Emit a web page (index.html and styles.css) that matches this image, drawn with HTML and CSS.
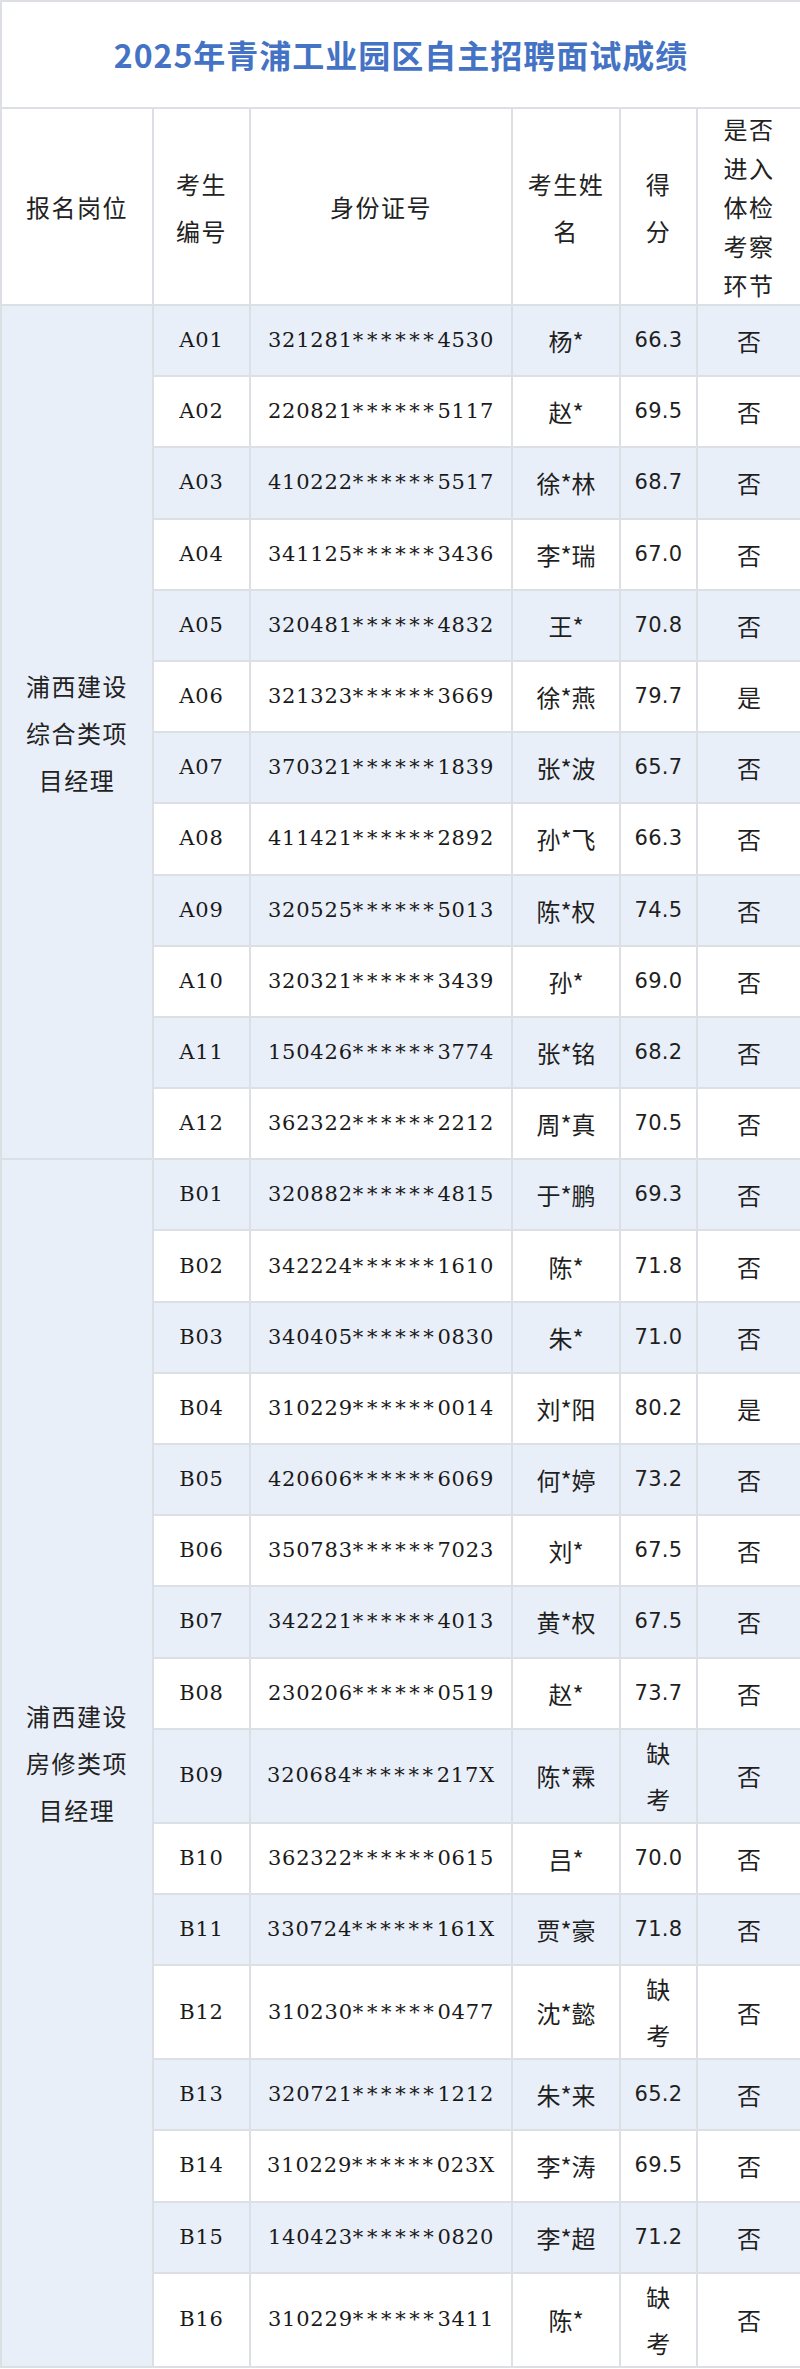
FILE: index.html
```html
<!DOCTYPE html>
<html lang="zh-CN">
<head>
<meta charset="utf-8">
<title>2025年青浦工业园区自主招聘面试成绩</title>
<link rel="stylesheet" href="styles.css">
</head>
<body>
<table class="score-table">
  <colgroup>
    <col class="c-post"><col class="c-no"><col class="c-id"><col class="c-name"><col class="c-score"><col class="c-pass">
  </colgroup>
  <tr class="title-row"><td colspan="6" class="title">2025年青浦工业园区自主招聘面试成绩</td></tr>
  <tr class="head-row">
    <th>报名岗位</th><th>考生编号</th><th>身份证号</th><th class="name-head">考生姓名</th><th>得分</th><th class="pass-head">是否进入体检考察环节</th>
  </tr>
  <tr class="alt"><td rowspan="12" class="post">浦西建设综合类项目经理</td><td class="no">A01</td><td class="id">321281<span class="mask">******</span>4530</td><td class="name">杨*</td><td class="score">66.3</td><td class="pass">否</td></tr>
  <tr><td class="no">A02</td><td class="id">220821<span class="mask">******</span>5117</td><td class="name">赵*</td><td class="score">69.5</td><td class="pass">否</td></tr>
  <tr class="alt"><td class="no">A03</td><td class="id">410222<span class="mask">******</span>5517</td><td class="name">徐*林</td><td class="score">68.7</td><td class="pass">否</td></tr>
  <tr><td class="no">A04</td><td class="id">341125<span class="mask">******</span>3436</td><td class="name">李*瑞</td><td class="score">67.0</td><td class="pass">否</td></tr>
  <tr class="alt"><td class="no">A05</td><td class="id">320481<span class="mask">******</span>4832</td><td class="name">王*</td><td class="score">70.8</td><td class="pass">否</td></tr>
  <tr><td class="no">A06</td><td class="id">321323<span class="mask">******</span>3669</td><td class="name">徐*燕</td><td class="score">79.7</td><td class="pass">是</td></tr>
  <tr class="alt"><td class="no">A07</td><td class="id">370321<span class="mask">******</span>1839</td><td class="name">张*波</td><td class="score">65.7</td><td class="pass">否</td></tr>
  <tr><td class="no">A08</td><td class="id">411421<span class="mask">******</span>2892</td><td class="name">孙*飞</td><td class="score">66.3</td><td class="pass">否</td></tr>
  <tr class="alt"><td class="no">A09</td><td class="id">320525<span class="mask">******</span>5013</td><td class="name">陈*权</td><td class="score">74.5</td><td class="pass">否</td></tr>
  <tr><td class="no">A10</td><td class="id">320321<span class="mask">******</span>3439</td><td class="name">孙*</td><td class="score">69.0</td><td class="pass">否</td></tr>
  <tr class="alt"><td class="no">A11</td><td class="id">150426<span class="mask">******</span>3774</td><td class="name">张*铭</td><td class="score">68.2</td><td class="pass">否</td></tr>
  <tr><td class="no">A12</td><td class="id">362322<span class="mask">******</span>2212</td><td class="name">周*真</td><td class="score">70.5</td><td class="pass">否</td></tr>

  <tr class="alt"><td rowspan="16" class="post">浦西建设房修类项目经理</td><td class="no">B01</td><td class="id">320882<span class="mask">******</span>4815</td><td class="name">于*鹏</td><td class="score">69.3</td><td class="pass">否</td></tr>
  <tr><td class="no">B02</td><td class="id">342224<span class="mask">******</span>1610</td><td class="name">陈*</td><td class="score">71.8</td><td class="pass">否</td></tr>
  <tr class="alt"><td class="no">B03</td><td class="id">340405<span class="mask">******</span>0830</td><td class="name">朱*</td><td class="score">71.0</td><td class="pass">否</td></tr>
  <tr><td class="no">B04</td><td class="id">310229<span class="mask">******</span>0014</td><td class="name">刘*阳</td><td class="score">80.2</td><td class="pass">是</td></tr>
  <tr class="alt"><td class="no">B05</td><td class="id">420606<span class="mask">******</span>6069</td><td class="name">何*婷</td><td class="score">73.2</td><td class="pass">否</td></tr>
  <tr><td class="no">B06</td><td class="id">350783<span class="mask">******</span>7023</td><td class="name">刘*</td><td class="score">67.5</td><td class="pass">否</td></tr>
  <tr class="alt"><td class="no">B07</td><td class="id">342221<span class="mask">******</span>4013</td><td class="name">黄*权</td><td class="score">67.5</td><td class="pass">否</td></tr>
  <tr><td class="no">B08</td><td class="id">230206<span class="mask">******</span>0519</td><td class="name">赵*</td><td class="score">73.7</td><td class="pass">否</td></tr>
  <tr class="alt"><td class="no">B09</td><td class="id">320684<span class="mask">******</span>217X</td><td class="name">陈*霖</td><td class="score absent">缺考</td><td class="pass">否</td></tr>
  <tr><td class="no">B10</td><td class="id">362322<span class="mask">******</span>0615</td><td class="name">吕*</td><td class="score">70.0</td><td class="pass">否</td></tr>
  <tr class="alt"><td class="no">B11</td><td class="id">330724<span class="mask">******</span>161X</td><td class="name">贾*豪</td><td class="score">71.8</td><td class="pass">否</td></tr>
  <tr><td class="no">B12</td><td class="id">310230<span class="mask">******</span>0477</td><td class="name">沈*懿</td><td class="score absent">缺考</td><td class="pass">否</td></tr>
  <tr class="alt"><td class="no">B13</td><td class="id">320721<span class="mask">******</span>1212</td><td class="name">朱*来</td><td class="score">65.2</td><td class="pass">否</td></tr>
  <tr><td class="no">B14</td><td class="id">310229<span class="mask">******</span>023X</td><td class="name">李*涛</td><td class="score">69.5</td><td class="pass">否</td></tr>
  <tr class="alt"><td class="no">B15</td><td class="id">140423<span class="mask">******</span>0820</td><td class="name">李*超</td><td class="score">71.2</td><td class="pass">否</td></tr>
  <tr><td class="no">B16</td><td class="id">310229<span class="mask">******</span>3411</td><td class="name">陈*</td><td class="score absent">缺考</td><td class="pass">否</td></tr>
</table>
</body>
</html>
```

FILE: styles.css
```css
html, body {
  margin: 0;
  padding: 0;
  background: #ffffff;
}

body {
  font-family: "Noto Sans CJK SC", "Noto Sans", sans-serif;
  color: #1f1f1f;
}

.score-table {
  width: 800px;
  table-layout: fixed;
  border-collapse: collapse;
}

.c-post { width: 152px; }
.c-no { width: 97px; }
.c-id { width: 262px; }
.c-name { width: 108px; }
.c-score { width: 77px; }
.c-pass { width: 104px; }

.score-table td,
.score-table th {
  border: 2px solid #dcdfe4;
  padding: 0 15px;
  text-align: center;
  vertical-align: middle;
  font-weight: normal;
  font-size: 24px;
  letter-spacing: 1.5px;
  line-height: 47px;
}

.title-row td.title {
  height: 105px;
  padding: 0;
  font-family: "Noto Sans CJK SC", sans-serif;
  font-weight: bold;
  font-size: 32px;
  letter-spacing: 1px;
  color: #4472c4;
}

.head-row th {
  height: 194px;
  color: #222222;
}

.head-row th.name-head {
  padding: 0 8px;
}

.head-row th.pass-head {
  line-height: 39px;
}

.score-table tr {
  height: 71.2px;
}

.score-table tr.alt td {
  background: #e9eff9;
}

.score-table td.post {
  background: #e9eff9;
  color: #222222;
}

.score-table td.no,
.score-table td.id {
  font-family: "DejaVu Serif", serif;
  font-size: 21px;
  letter-spacing: 0.8px;
  color: #1a1a1a;
  padding: 0;
}

.score-table td.id .mask {
  letter-spacing: 3.6px;
}

.score-table td.name {
  font-size: 24px;
  letter-spacing: 0;
  padding: 0;
}

.score-table td.score {
  font-family: "DejaVu Sans", sans-serif;
  font-size: 21px;
  letter-spacing: 0.3px;
  padding: 0;
}

.score-table td.score.absent {
  font-family: "Noto Sans CJK SC", sans-serif;
  font-size: 24px;
  padding: 0 15px;
  line-height: 46px;
}

.score-table td.pass {
  font-size: 24px;
  letter-spacing: 0;
}
```
